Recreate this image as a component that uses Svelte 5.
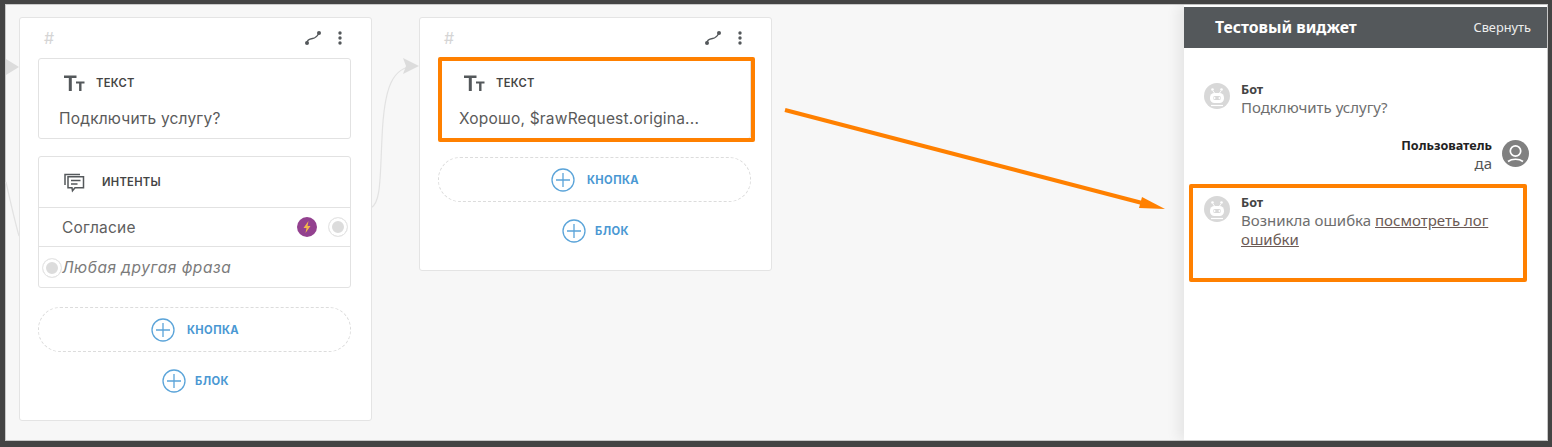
<script>
  const dark = '#54585b'
</script>

{#snippet textBlock(body)}
  <div class="block text-block">
    <div class="block-head">
      <svg class="tt" width="22" height="18" viewBox="0 0 22 18"><path d="M1 1.500h12.500v2.600H8.800V17H5.800V4.100H1zM13 7.500h8.500v2h-3V17h-2.400V9.500H13z" fill={dark}/></svg>
      <span class="block-title">ТЕКСТ</span>
    </div>
    <p class="block-text">{body}</p>
  </div>
{/snippet}

{#snippet plus()}
  <svg class="plus" width="24" height="24" viewBox="0 0 24 24"><circle cx="12" cy="12" r="11" fill="none" stroke="#5ba4d9" stroke-width="1.3"/><path d="M12 5v14M5 12h14" stroke="#5ba4d9" stroke-width="1.3"/></svg>
{/snippet}

{#snippet addButtons()}
  <div class="add-btn">{@render plus()}<span>КНОПКА</span></div>
  <div class="add-block">{@render plus()}<span>БЛОК</span></div>
{/snippet}

{#snippet cardTop()}
  <div class="card-top">
    <span class="hash">#</span>
    <svg width="18" height="16" viewBox="0 0 18 16"><path d="M3 13c0-3 2-4 5.500-4.500S13.500 6 15 3" fill="none" stroke={dark} stroke-width="1.3"/><circle cx="3" cy="13" r="2" fill={dark}/><circle cx="15" cy="3" r="2" fill={dark}/></svg>
    <svg class="dots" width="6" height="16" viewBox="0 0 6 16"><circle cx="3" cy="3" r="1.700" fill={dark}/><circle cx="3" cy="8" r="1.700" fill={dark}/><circle cx="3" cy="13" r="1.700" fill={dark}/></svg>
  </div>
{/snippet}

{#snippet botAvatar()}
  <svg class="avatar" width="26" height="26" viewBox="0 0 26 26">
    <circle cx="13" cy="13" r="13" fill="#d8d8d8"/>
    <rect x="6" y="10" width="14" height="10" rx="4.500" fill="#fff"/>
    <rect x="9" y="13" width="8" height="4" rx="2" fill="#d8d8d8"/>
    <circle cx="10.500" cy="15" r="1" fill="#fff"/><circle cx="15.500" cy="15" r="1" fill="#fff"/>
    <circle cx="8.500" cy="6.500" r="1.300" fill="#fff"/><circle cx="17.500" cy="6.500" r="1.300" fill="#fff"/>
    <path d="M9 8l1.500 2M17 8l-1.500 2" stroke="#fff" stroke-width="1"/>
    <path d="M7 22.500h12" stroke="#fff" stroke-width="1.200"/>
  </svg>
{/snippet}

<div class="frame">
  <main class="canvas">
    <div class="card">
      {@render cardTop()}
      {@render textBlock('Подключить услугу?')}
      <div class="block intents">
        <div class="block-head intents-head">
          <svg width="22" height="22" viewBox="0 0 22 22" fill="none" stroke={dark} stroke-width="1.500"><path d="M2 14V3.500h15"/><path d="M5 5.800h15.500v11H12l-2.500 3-0.500-3H5z" fill="#fff"/><path d="M8 9.500h9.500M8 13h6.500"/></svg>
          <span class="block-title">ИНТЕНТЫ</span>
        </div>
        <div class="row">
          <span>Согласие</span>
          <svg class="bolt" width="20" height="20" viewBox="0 0 20 20"><circle cx="10" cy="10" r="10" fill="#93418f"/><path d="M11.500 4L6.500 11h3L8.500 16l5-7h-3z" fill="#f2b84b"/></svg>
          <span class="port right"></span>
        </div>
        <div class="row other">
          <span class="port left"></span>
          <em>Любая другая фраза</em>
        </div>
      </div>
      {@render addButtons()}
    </div>
    <div class="card short">
      {@render cardTop()}
      {@render textBlock('Хорошо, $rawRequest.origina...')}
      {@render addButtons()}
    </div>
  </main>

  <aside class="widget">
    <header class="widget-head">
      <span class="widget-title">Тестовый виджет</span>
      <span class="collapse">Свернуть</span>
    </header>
    <div class="chat">
      <div class="msg">
        {@render botAvatar()}
        <div><b>Бот</b><p>Подключить услугу?</p></div>
      </div>
      <div class="msg user">
        <div><b>Пользователь</b><p>да</p></div>
        <svg class="avatar" width="27" height="27" viewBox="0 0 27 27"><circle cx="13.500" cy="13.500" r="13.500" fill="#808080"/><circle cx="13.500" cy="11" r="5.200" fill="none" stroke="#fff" stroke-width="1.700"/><path d="M6 21.500c4-3 11-3 15 0" fill="none" stroke="#fff" stroke-width="1.700"/></svg>
      </div>
      <div class="msg err">
        {@render botAvatar()}
        <div><b>Бот</b><p>Возникла ошибка <a href="#log">посмотреть лог ошибки</a></p></div>
      </div>
    </div>
  </aside>

  <!-- пометки поверх скриншота -->
  <svg class="edges" width="1552" height="447" viewBox="0 0 1552 447">
    <path d="M6 59l13 8-13 8z" fill="#dcdcdc"/>
    <path d="M6 182c4 18 8 36 13 54" fill="none" stroke="#e2e2e2" stroke-width="1.200"/>
    <path d="M371 208c10-6 9-30 11-70 2-50 10-72 34-72" fill="none" stroke="#e2e2e2" stroke-width="1.200"/>
    <path d="M403 58l16 8-16 8 3-8z" fill="#dcdcdc"/>
  </svg>
  <div class="mark mark-a"></div>
  <div class="mark mark-b"></div>
  <svg class="edges" width="1552" height="447" viewBox="0 0 1552 447">
    <path d="M785 110L1146 204" stroke="#ff8000" stroke-width="4"/>
    <path d="M1165 209l-26-1 3-11z" fill="#ff8000"/>
  </svg>
</div>

<style>
  :global(body) {
    margin: 0;
  }
  .frame {
    position: relative;
    box-sizing: border-box;
    width: 1552px;
    height: 447px;
    display: flex;
    overflow: hidden;
    border: solid #444;
    border-width: 4px 4px 6px 5px;
    padding: 1px;
    background: #c9c9c9;
    font-family: "Inter", "Liberation Sans", sans-serif;
    color: #555;
  }
  .canvas {
    flex: 1;
    display: flex;
    align-items: flex-start;
    gap: 47px;
    padding: 12px 0 0 13px;
    background: #f7f7f7;
  }
  .card {
    position: relative;
    z-index: 1;
    box-sizing: border-box;
    width: 353px;
    height: 404px;
    padding: 0 20px 0 18px;
    background: #fff;
    border: 1px solid #e4e4e4;
    border-radius: 3px;
  }
  .card.short {
    height: 254px;
  }
  .card-top {
    height: 40px;
    display: flex;
    align-items: center;
    gap: 14px;
    padding: 0 8px 0 6px;
  }
  .hash {
    margin-right: auto;
    font-size: 16px;
    color: #d5d5d5;
  }
  .dots {
    margin-left: 1px;
  }
  .block {
    border: 1px solid #e2e2e2;
    border-radius: 3px;
    background: #fff;
  }
  .text-block {
    box-sizing: border-box;
    height: 81px;
    padding: 14px 20px 0 20px;
  }
  .block-head {
    display: flex;
    align-items: center;
    gap: 11px;
    padding-left: 4px;
    height: 20px;
  }
  .block-title {
    font-size: 11.2px;
    font-weight: 600;
    color: #444;
    letter-spacing: 0.3px;
  }
  .block-text {
    margin: 16px 0 0;
    font-size: 15.5px;
    letter-spacing: 0.2px;
    color: #5a5a5a;
    white-space: nowrap;
  }
  .intents {
    margin-top: 17px;
    height: 132px;
    box-sizing: border-box;
  }
  .intents-head {
    height: 50px;
    padding-left: 24px;
    gap: 17px;
    border-bottom: 1px solid #e2e2e2;
  }
  .row {
    display: flex;
    align-items: center;
    height: 38px;
    padding: 0 2px 0 23px;
    font-size: 15.5px;
    letter-spacing: 0.2px;
    color: #5f5f5f;
    border-bottom: 1px solid #e2e2e2;
  }
  .row.other {
    height: 41px;
    border-bottom: 0;
    position: relative;
    color: #7b7b7b;
    letter-spacing: 0.5px;
  }
  .bolt {
    margin-left: auto;
    margin-right: 11px;
  }
  .port {
    box-sizing: border-box;
    width: 20px;
    height: 20px;
    border-radius: 50%;
    background: #dcdcdc;
    border: 1px solid #e6e6e6;
    box-shadow: inset 0 0 0 3px #fff;
  }
  .port.left {
    position: absolute;
    left: 3px;
  }
  .add-btn {
    box-sizing: border-box;
    height: 45px;
    margin-top: 19px;
    padding-left: 1px;
    display: flex;
    align-items: center;
    justify-content: center;
    gap: 12px;
    border: 1px dashed #dcdcdc;
    border-radius: 22px;
    background: #fff;
  }
  .short .add-btn {
    margin-top: 18px;
  }
  .add-block {
    margin-top: 17px;
    padding-left: 2px;
    display: flex;
    align-items: center;
    justify-content: center;
    gap: 9px;
  }
  .add-btn span, .add-block span {
    font-size: 11.2px;
    font-weight: 700;
    color: #4a98d3;
    letter-spacing: 0.4px;
  }
  .widget {
    position: relative;
    z-index: 1;
    box-sizing: border-box;
    width: 363px;
    padding-top: 2px;
    background: #fff;
    box-shadow: -6px 0 12px rgba(0, 0, 0, 0.07);
    font-family: "Noto Sans", "Open Sans", sans-serif;
  }
  .widget-head {
    height: 41px;
    display: flex;
    align-items: center;
    justify-content: space-between;
    padding: 0 16px 2px 31px;
    box-sizing: border-box;
    background: #54585b;
    color: #fff;
  }
  .widget-title {
    font-size: 15.8px;
    font-weight: 700;
  }
  .collapse {
    font-size: 12.8px;
    color: #eee;
  }
  .chat {
    display: flex;
    flex-direction: column;
    padding: 34px 18px 0 20px;
  }
  .msg {
    display: flex;
    gap: 11px;
    font-size: 15px;
    line-height: 19px;
    color: #6e6e6e;
  }
  .msg b {
    display: block;
    font-size: 12.6px;
    line-height: 16px;
    color: #444;
  }
  .msg p {
    margin: 0;
  }
  .msg.user {
    margin-top: 21px;
    justify-content: flex-end;
    text-align: right;
    gap: 10px;
  }
  .msg.user b {
    color: #222;
  }
  .msg.user p {
    color: #555;
  }
  .msg.user .avatar {
    margin-top: 2px;
  }
  .msg.err {
    margin-top: 22px;
    width: 288px;
  }
  .msg.err a {
    color: #6b5a55;
  }
  .avatar {
    flex: none;
    margin-top: 1px;
  }
  .edges {
    position: absolute;
    left: -5px;
    top: -4px;
    z-index: 2;
    pointer-events: none;
  }
  .edges:first-of-type {
    z-index: 0;
  }
  .mark {
    position: absolute;
    z-index: 3;
    box-sizing: border-box;
    border: 4px solid #ff8000;
    border-radius: 2px;
  }
  .mark-a {
    left: 433px;
    top: 53px;
    width: 317px;
    height: 85px;
  }
  .mark-b {
    left: 1184px;
    top: 180px;
    width: 338px;
    height: 98px;
  }
</style>
